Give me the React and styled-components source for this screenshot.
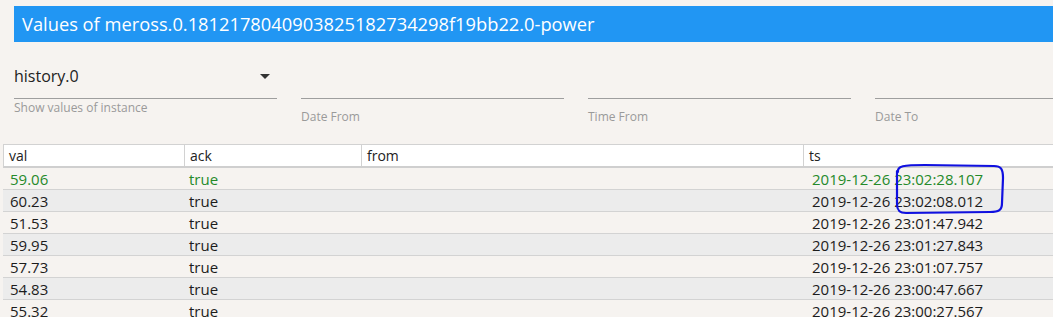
import React from 'react';
import styled, { createGlobalStyle } from 'styled-components';

const GlobalStyle = createGlobalStyle`
  html, body {
    margin: 0;
    padding: 0;
    background: #f6f3f0;
    overflow: hidden;
    font-family: "Open Sans", "Noto Sans", sans-serif;
  }
`;

const Page = styled.div`
  position: relative;
  width: 1053px;
  height: 317px;
  padding-top: 6px;
  box-sizing: border-box;
  overflow: hidden;
`;

const TitleBar = styled.div`
  margin-left: 14px;
  height: 36px;
  background: #2196f3;
  color: #fff;
  font-size: 18.3px;
  line-height: 36px;
  padding-left: 8px;
  white-space: nowrap;
`;

const FormRow = styled.div`
  display: flex;
  gap: 24px;
  margin: 18px 0 0 14px;
  height: 84px;
`;

const Field = styled.div`
  flex: 0 0 263px;
  display: flex;
  flex-direction: column;
`;

const InputLine = styled.div`
  height: 38px;
  border-bottom: 1px solid #9e9e9e;
  display: flex;
  align-items: center;
  justify-content: space-between;
`;

const SelectValue = styled.span`
  font-size: 16px;
  color: #222;
  margin-top: -7px;
`;

const Arrow = styled.span`
  width: 0;
  height: 0;
  border-left: 5px solid transparent;
  border-right: 5px solid transparent;
  border-top: 5px solid #333;
  margin: -6px 7px 0 0;
`;

const Helper = styled.div`
  font-size: 12px;
  color: #9a9a9a;
  margin-top: ${({ low }) => (low ? '9px' : '0')};
`;

const Table = styled.div`
  margin: 0 0 0 3px;
  width: 1090px;
`;

const HeadRow = styled.div`
  display: grid;
  grid-template-columns: 180px 177px 442px 1fr;
  background: #fff;
  border-top: 1px solid #d2d2d2;
  border-left: 1px solid #d2d2d2;
  border-bottom: 2px solid #cfcfcf;
  height: 21px;
`;

const HeadCell = styled.div`
  font-size: 14px;
  color: #222;
  line-height: 21px;
  padding-left: 5px;
  border-left: ${({ first }) => (first ? 'none' : '1px solid #d2d2d2')};
`;

const Row = styled.div`
  display: grid;
  grid-template-columns: 180px 177px 442px 1fr;
  height: 21px;
  border-bottom: 1px solid #d3d3d3;
  background: ${({ even }) => (even ? '#ececec' : '#f6f3f0')};
  color: ${({ fresh }) => (fresh ? '#258a2a' : '#1c1c1c')};
  font-size: 15px;
  line-height: 22px;
`;

const Cell = styled.div`
  padding-left: ${({ pad }) => pad || 6}px;
  white-space: nowrap;
`;

const Scribble = styled.svg`
  position: absolute;
  left: 0;
  top: 0;
  pointer-events: none;
`;

const rows = [
  ['59.06', 'true', '2019-12-26 23:02:28.107'],
  ['60.23', 'true', '2019-12-26 23:02:08.012'],
  ['51.53', 'true', '2019-12-26 23:01:47.942'],
  ['59.95', 'true', '2019-12-26 23:01:27.843'],
  ['57.73', 'true', '2019-12-26 23:01:07.757'],
  ['54.83', 'true', '2019-12-26 23:00:47.667'],
  ['55.32', 'true', '2019-12-26 23:00:27.567'],
];

export default function App() {
  return (
    <Page>
      <GlobalStyle />
      <TitleBar>Values of meross.0.1812178040903825182734298f19bb22.0-power</TitleBar>
      <FormRow>
        <Field>
          <InputLine>
            <SelectValue>history.0</SelectValue>
            <Arrow />
          </InputLine>
          <Helper>Show values of instance</Helper>
        </Field>
        <Field>
          <InputLine />
          <Helper low>Date From</Helper>
        </Field>
        <Field>
          <InputLine />
          <Helper low>Time From</Helper>
        </Field>
        <Field>
          <InputLine />
          <Helper low>Date To</Helper>
        </Field>
      </FormRow>
      <Table>
        <HeadRow>
          <HeadCell first>val</HeadCell>
          <HeadCell>ack</HeadCell>
          <HeadCell>from</HeadCell>
          <HeadCell>ts</HeadCell>
        </HeadRow>
        {rows.map((r, i) => (
          <Row key={i} even={i % 2 === 1} fresh={i === 0}>
            <Cell pad={7}>{r[0]}</Cell>
            <Cell>{r[1]}</Cell>
            <Cell />
            <Cell pad={10}>{r[2]}</Cell>
          </Row>
        ))}
      </Table>
      <Scribble width="1053" height="317">
        <path
          d="M898 172 C897 166 903 165 925 165 L994 166 C1001 166 1003 169 1003 178 L1002 203 C1002 210 999 212 990 212 L906 213 C899 213 897 210 897 204 L897 171"
          fill="none"
          stroke="#1010e0"
          strokeWidth="2.2"
          strokeLinecap="round"
        />
      </Scribble>
    </Page>
  );
}
